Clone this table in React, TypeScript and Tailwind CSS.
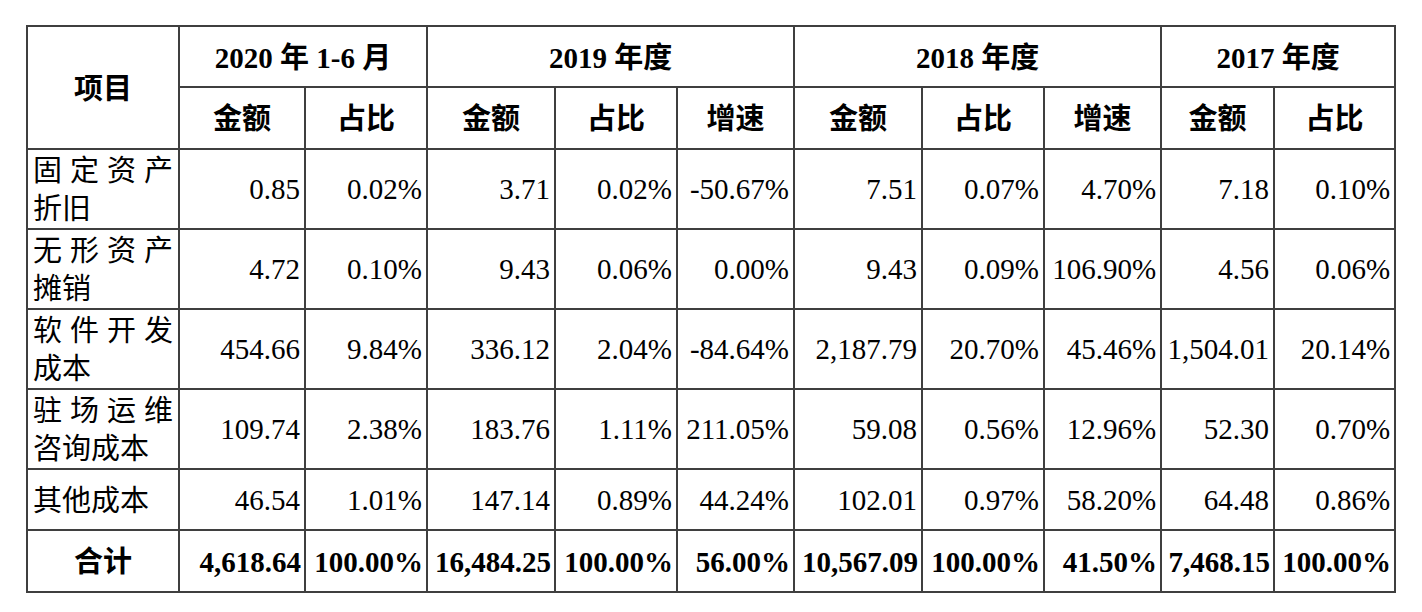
import React from 'react';

const colWidths = [152, 126, 122, 128, 122, 117, 128, 122, 117, 113, 121];

interface Row {
  label: string;
  height: string;
  values: string[];
}

const rows: Row[] = [
  { label: '固定资产折旧', height: 'h-[79px]', values: ['0.85', '0.02%', '3.71', '0.02%', '-50.67%', '7.51', '0.07%', '4.70%', '7.18', '0.10%'] },
  { label: '无形资产摊销', height: 'h-[79px]', values: ['4.72', '0.10%', '9.43', '0.06%', '0.00%', '9.43', '0.09%', '106.90%', '4.56', '0.06%'] },
  { label: '软件开发成本', height: 'h-[80px]', values: ['454.66', '9.84%', '336.12', '2.04%', '-84.64%', '2,187.79', '20.70%', '45.46%', '1,504.01', '20.14%'] },
  { label: '驻场运维咨询成本', height: 'h-[80px]', values: ['109.74', '2.38%', '183.76', '1.11%', '211.05%', '59.08', '0.56%', '12.96%', '52.30', '0.70%'] },
  { label: '其他成本', height: 'h-[61px]', values: ['46.54', '1.01%', '147.14', '0.89%', '44.24%', '102.01', '0.97%', '58.20%', '64.48', '0.86%'] },
];

const totals = ['4,618.64', '100.00%', '16,484.25', '100.00%', '56.00%', '10,567.09', '100.00%', '41.50%', '7,468.15', '100.00%'];

const subHeads = ['金额', '占比', '金额', '占比', '增速', '金额', '占比', '增速', '金额', '占比'];

const cell = 'border-2 border-[#3f3f3f] p-0';
const head = `${cell} pt-[4px] text-center font-bold`;

export default function App() {
  return (
    <div className="w-[1422px] h-[612px] bg-white text-black text-[29px] [font-family:'Liberation_Serif','Noto_Sans_CJK_SC',serif]">
      <div className="pt-[25px] pl-[26px]">
        <table className="table-fixed border-collapse w-[1370px]">
          <colgroup>
            {colWidths.map((w, i) => (
              <col key={i} style={{ width: w }} />
            ))}
          </colgroup>
          <thead>
            <tr className="h-[61px]">
              <th rowSpan={2} className={head}>项目</th>
              <th colSpan={2} className={head}>2020 年 1-6 月</th>
              <th colSpan={3} className={head}>2019 年度</th>
              <th colSpan={3} className={head}>2018 年度</th>
              <th colSpan={2} className={head}>2017 年度</th>
            </tr>
            <tr className="h-[62px]">
              {subHeads.map((h, i) => (
                <th key={i} className={head}>{h}</th>
              ))}
            </tr>
          </thead>
          <tbody>
            {rows.map((r) => (
              <tr key={r.label} className={r.height}>
                <td className={`${cell} px-[5px] pt-[2px] text-justify leading-[38px] font-normal`}>{r.label}</td>
                {r.values.map((v, i) => (
                  <td key={i} className={`${cell} px-[4px] pt-[2px] text-right whitespace-nowrap`}>{v}</td>
                ))}
              </tr>
            ))}
            <tr className="h-[62px]">
              <td className={`${cell} pt-[3px] text-center font-bold`}>合计</td>
              {totals.map((v, i) => (
                <td key={i} className={`${cell} px-[3px] pt-[3px] text-right font-bold whitespace-nowrap`}>{v}</td>
              ))}
            </tr>
          </tbody>
        </table>
      </div>
    </div>
  );
}
